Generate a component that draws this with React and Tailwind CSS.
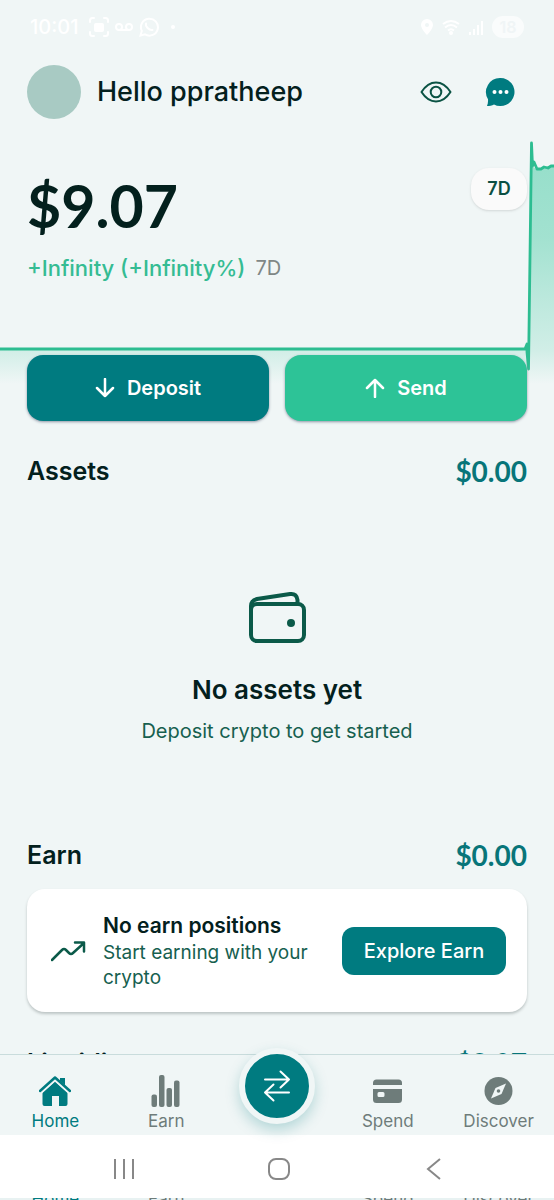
const NAV_LABELS = ['Home', 'Earn', '', 'Spend', 'Discover']

function StatusBar() {
    return (
        <div className="flex h-[54px] items-center justify-between px-[30px] text-white">
            <div className="flex items-center gap-1.5">
                <span className="mr-1 text-xl leading-6 font-medium">10:01</span>
                <svg className="size-5" viewBox="0 0 20 20" fill="none" stroke="currentColor" strokeWidth="2" strokeLinecap="round">
                    <path d="M1 5V3.500Q1 1 3.500 1H5M15 1h1.500Q19 1 19 3.500V5M19 15v1.500q0 2.500-2.500 2.500H15M5 19H3.500Q1 19 1 16.500V15" />
                    <rect x="6" y="7" width="8" height="7" rx="1" fill="currentColor" />
                </svg>
                <svg className="h-5 w-[18px]" viewBox="0 0 18 20" fill="none" stroke="currentColor" strokeWidth="2">
                    <circle cx="4" cy="10" r="3" />
                    <circle cx="14" cy="10" r="3" />
                    <path d="M4 13h10" />
                </svg>
                <svg className="size-5" viewBox="0 0 20 20" fill="none" stroke="currentColor" strokeWidth="2">
                    <path d="M1.500 18.500l1.300-4.600A8.500 8.500 0 1 1 6 17.400z" />
                    <path d="M7 6.500c-1 3 3 7 6.500 6.500" strokeLinecap="round" />
                </svg>
                <span className="ml-1.5 size-1 rounded-full bg-white" />
            </div>
            <div className="flex items-center gap-2">
                <svg className="h-4 w-3.5" viewBox="0 0 14 16" fill="currentColor" fillRule="evenodd">
                    <path d="M7 0a6 6 0 0 1 6 6c0 4-6 10-6 10S1 10 1 6a6 6 0 0 1 6-6zm0 4a2 2 0 1 0 0 4 2 2 0 0 0 0-4z" />
                </svg>
                <svg className="h-4 w-[18px]" viewBox="0 0 18 16" fill="none" stroke="currentColor" strokeWidth="2">
                    <path d="M1 5q8-6 16 0M3 8.500q6-5 12 0M6 11.500q3-2.500 6 0" />
                    <circle cx="9" cy="14" r="1" fill="currentColor" />
                </svg>
                <svg className="size-4" viewBox="0 0 16 16" fill="currentColor">
                    <path d="M1 13h2v3H1zM5 10h2v6H5zM9 6h2v10H9zM13 2h2v14h-2z" />
                </svg>
                <span className="flex h-[22px] w-8 items-center justify-center rounded-full bg-[#fafcfc] text-base leading-5 font-semibold text-[#f0f5f6]">18</span>
            </div>
        </div>
    )
}

function Header() {
    return (
        <header className="flex items-center px-[27px] pt-[11px]">
            <div className="size-[54px] rounded-full bg-[#a8cac3]" />
            <h1 className="ml-4 text-[27px] leading-8 font-medium">Hello ppratheep</h1>
            <button type="button" aria-label="Hide balance" className="ml-auto">
                <svg className="size-8" viewBox="0 0 32 32" fill="none" stroke="#0b5344" strokeWidth="2">
                    <path d="M1.500 16C5.500 9.800 10.500 6.500 16 6.500s10.500 3.300 14.500 9.500c-4 6.200-9 9.500-14.500 9.500S5.500 22.200 1.500 16z" strokeLinejoin="round" />
                    <circle cx="16" cy="16" r="5.300" />
                </svg>
            </button>
            <button type="button" aria-label="Messages" className="mr-3 ml-[33px]">
                <svg className="size-[30px]" viewBox="0 0 30 30">
                    <path d="M15.500 1A14 14 0 1 1 9 27.400C7 28.400 4.500 29 2 29c.8-2 1.200-4.500 1-6.800A14 14 0 0 1 15.500 1z" fill="#007b80" />
                    <circle cx="9.500" cy="15" r="2" fill="#fff" />
                    <circle cx="15.500" cy="15" r="2" fill="#fff" />
                    <circle cx="21.500" cy="15" r="2" fill="#fff" />
                </svg>
            </button>
        </header>
    )
}

function BalanceChart() {
    return (
        <svg className="absolute right-0 top-[19px] h-[246px] w-full" viewBox="0 0 554 246" preserveAspectRatio="none" fill="none">
            <defs>
                <linearGradient id="area" x1="0" y1="20" x2="0" y2="246" gradientUnits="userSpaceOnUse">
                    <stop offset="0" stopColor="#2dc397" stopOpacity=".46" />
                    <stop offset=".35" stopColor="#2dc397" stopOpacity=".4" />
                    <stop offset=".85" stopColor="#2dc397" stopOpacity=".16" />
                    <stop offset="1" stopColor="#2dc397" stopOpacity="0" />
                </linearGradient>
            </defs>
            <path d="M0 211H527L529 231L531 5L532 28L537 32L544 29L554 28V246H0z" fill="url(#area)" />
            <path d="M0 211H525L527 206V214L528.500 231L531.500 5L532.500 28L534 24L537 31L541 31L544 29L548 30L551 28H554" stroke="#2dbd91" strokeWidth="2.800" strokeLinejoin="round" />
        </svg>
    )
}

function SectionTitle({ title, amount }) {
    return (
        <div className="flex items-center justify-between">
            <h2 className="text-[25px] leading-8 font-semibold">{title}</h2>
            <span className="font-['Lato',sans-serif] text-[28px] leading-8 font-bold text-[#087579]">{amount}</span>
        </div>
    )
}

function Arrow({ up }) {
    return (
        <svg className="size-5" viewBox="0 0 20 20" fill="none" stroke="currentColor" strokeWidth="2.500" strokeLinecap="round" strokeLinejoin="round">
            <path d={up ? 'M10 19V2M2 10l8-8 8 8' : 'M10 1v17M2 10l8 8 8-8'} />
        </svg>
    )
}

function Balance() {
    return (
        <section className="relative">
            <BalanceChart />
            <div className="relative flex h-[236px] items-start justify-between px-[27px] pt-[49px]">
                <div>
                    <p className="mt-1.5 font-['Lato',sans-serif] text-[59px] leading-[64px] font-bold">$9.07</p>
                    <p className="mt-3.5 flex items-center gap-2.5 text-[22px] leading-8 font-medium text-[#35bc93]">
                        +Infinity (+Infinity%)
                        <span className="text-xl font-normal text-[#7f8786]">7D</span>
                    </p>
                </div>
                <button type="button" className="h-[42px] w-14 rounded-[18px] bg-[#fafafa] text-lg font-semibold text-[#0b4f43] shadow">7D</button>
            </div>
            <div className="relative grid grid-cols-2 gap-4 px-[27px] text-[20px] font-semibold text-white">
                <button type="button" className="flex h-[66px] items-center justify-center gap-3 rounded-2xl bg-[#007b80] shadow-sm shadow-gray-400">
                    <Arrow />Deposit
                </button>
                <button type="button" className="flex h-[66px] items-center justify-center gap-3 rounded-2xl bg-[#2dc397] shadow-sm shadow-gray-400">
                    <Arrow up />Send
                </button>
            </div>
        </section>
    )
}

function EmptyAssets() {
    return (
        <div className="flex flex-col items-center pt-[103px] pb-[92px]">
            <svg className="h-14 w-[60px]" viewBox="0 0 60 56" fill="none" stroke="#0b5a49" strokeWidth="4">
                <rect x="4" y="14" width="53" height="37" rx="6" />
                <path d="M4 23v-7c0-4 2-6 6-7L43 4c5-.7 7 2 7.500 6v4" />
                <circle cx="44" cy="33" r="4" fill="#0b5a49" stroke="none" />
            </svg>
            <h3 className="mt-7 text-[26px] leading-8 font-semibold">No assets yet</h3>
            <p className="mt-[9px] text-xl leading-8 text-[#16604f]">Deposit crypto to get started</p>
        </div>
    )
}

function EarnCard() {
    return (
        <div className="mt-[18px] flex h-[123px] items-center rounded-[18px] bg-white pl-6 pr-[21px] shadow-[0_2px_3px_#bcc4c4]">
            <svg className="h-6 w-9 shrink-0" viewBox="0 0 36 24" fill="none" stroke="#0b5a49" strokeWidth="2.500" strokeLinecap="round" strokeLinejoin="round">
                <path d="M1 21L11 11q2-2 4 0l3 3q2 2 4 0L33 4M24 3.500h9v9" />
            </svg>
            <div className="ml-4 min-w-0 flex-1">
                <h3 className="text-[21px] leading-7 font-semibold">No earn positions</h3>
                <p className="text-[19px] leading-[25px] text-[#16604f]">Start earning with your crypto</p>
            </div>
            <button type="button" className="h-12 w-[164px] shrink-0 rounded-xl bg-[#007b80] text-[20px] font-medium text-white">Explore Earn</button>
        </div>
    )
}

function NavItem({ label, active, children }) {
    return (
        <a href="#" className={`flex flex-col items-center pt-5 ${active ? 'text-[#007b80]' : 'text-[#6e7c7a]'}`}>
            <svg className="size-8" viewBox="0 0 32 32" fill="currentColor">{children}</svg>
            <span className="mt-0.5 text-[17px] leading-6">{label}</span>
        </a>
    )
}

function BottomNav() {
    return (
        <nav className="relative grid h-[81px] shrink-0 grid-cols-5 border-t border-[#c9dcdc] bg-[#f0f6f6]">
            <NavItem label="Home" active>
                <path d="M21 3h5v9l-5-4.600z" />
                <path d="M16 6.500L28.500 17.500V29q0 2-2 2H20V21h-7v10H5.500q-2 0-2-2V17.500z" />
                <path d="M1 17.500L16 4l15 13.500" fill="none" stroke="#f0f6f6" strokeWidth="4" />
                <path d="M1 16L16 2.500L31 16" fill="none" stroke="currentColor" strokeWidth="2.500" strokeLinecap="round" strokeLinejoin="round" />
            </NavItem>
            <NavItem label="Earn">
                <rect x="1.500" y="19.500" width="5.500" height="12.500" rx="2" />
                <rect x="9" y="0" width="5.500" height="32" rx="2" />
                <rect x="16.500" y="13" width="5.500" height="19" rx="2" />
                <rect x="24" y="5.500" width="5.500" height="26.500" rx="2" />
            </NavItem>
            <div className="relative flex justify-center">
                <button type="button" aria-label="Swap" className="absolute -top-[7px] flex size-[76px] items-center justify-center rounded-full border-[6px] border-[#f0f6f6] bg-[#007b80] text-white shadow-[0_6px_14px_#007b8040]">
                    <svg className="size-8" viewBox="0 0 32 32" fill="none" stroke="currentColor" strokeWidth="2" strokeLinecap="round" strokeLinejoin="round">
                        <path d="M4 9.500h24M19.500 1.500l8.500 8-8.500 8M28 22.500H4M12.500 14.500l-8.500 8 8.500 8" />
                    </svg>
                </button>
            </div>
            <NavItem label="Spend">
                <path d="M1 10V8q0-3.500 3.500-3.500h22Q30 4.500 30 8v2z" />
                <path fillRule="evenodd" d="M1 14h29v10.500q0 3.500-3.500 3.500h-22Q1 28 1 24.500zM7 17q-1.500 0-1.500 1.500v2Q5.500 22 7 22h4q1.500 0 1.500-1.500v-2Q12.500 17 11 17z" />
            </NavItem>
            <NavItem label="Discover">
                <circle cx="15.500" cy="16" r="14" />
                <path d="M23 8.500l-4.500 10.500L8 23.500l4.500-10.500z" fill="#f0f6f6" />
                <circle cx="15.500" cy="16" r="1.800" />
            </NavItem>
        </nav>
    )
}

function SystemNav() {
    return (
        <div className="flex h-[63px] shrink-0 items-center justify-around bg-white pt-1 pr-[42px] pl-[46px] text-[#888]">
            <button type="button" aria-label="Recent apps">
                <svg className="size-6" viewBox="0 0 24 24" stroke="currentColor" strokeWidth="2">
                    <path d="M3 2v20M12 2v20M21 2v20" />
                </svg>
            </button>
            <button type="button" aria-label="Home screen">
                <svg className="size-6" viewBox="0 0 24 24" fill="none" stroke="currentColor" strokeWidth="2">
                    <rect x="2" y="2" width="20" height="20" rx="7" />
                </svg>
            </button>
            <button type="button" aria-label="Back">
                <svg className="size-6" viewBox="0 0 24 24" fill="none" stroke="currentColor" strokeWidth="2">
                    <path d="M18 2L6 12l12 10" />
                </svg>
            </button>
        </div>
    )
}

export default function App() {
    return (
        <div className="flex h-screen flex-col overflow-hidden bg-[#f0f6f6] font-['Inter',sans-serif] text-[#03201d]">
            <main className="min-h-0 flex-1 overflow-hidden">
                <StatusBar />
                <Header />
                <Balance />
                <div className="px-[27px] pt-[34px]">
                    <SectionTitle title="Assets" amount="$0.00" />
                    <EmptyAssets />
                    <SectionTitle title="Earn" amount="$0.00" />
                    <EarnCard />
                    <div className="pt-[35px]">
                        <SectionTitle title="Liquidity" amount="$9.07" />
                    </div>
                </div>
            </main>
            <BottomNav />
            <SystemNav />
            <div aria-hidden="true" className="grid h-0.5 shrink-0 grid-cols-5 grid-rows-[2px] items-center justify-items-center overflow-hidden bg-[#e8f2f2] text-[17px] leading-6 text-[#6e7c7a]">
                {NAV_LABELS.map((label, i) => (
                    <span key={i} className={i === 0 ? 'text-[#007b80]' : ''}>{label}</span>
                ))}
            </div>
        </div>
    )
}
